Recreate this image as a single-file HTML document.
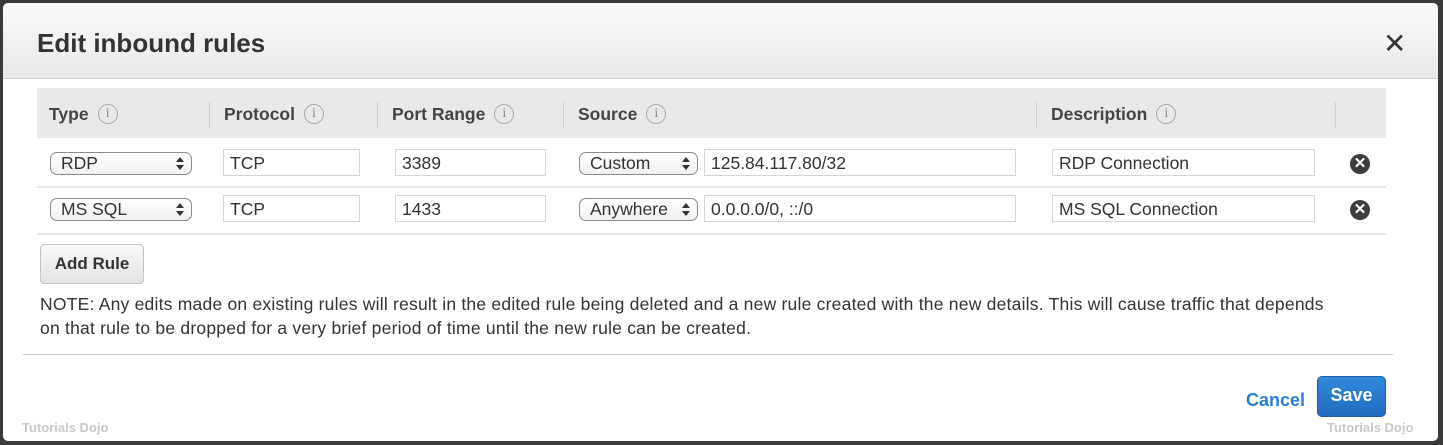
<!DOCTYPE html>
<html><head><meta charset="utf-8"><style>
*{box-sizing:border-box;margin:0;padding:0}
body{width:1443px;height:445px;background:#3a3a3a;position:relative;overflow:hidden;font-family:"Liberation Sans",Arial,sans-serif;color:#333}
#dlg{position:absolute;left:3px;top:3px;width:1435px;height:438px;background:#fff;border-radius:5px;overflow:hidden}
#hdr{position:absolute;left:0;top:0;width:100%;height:76px;background:linear-gradient(#fafafa,#e9e9e9);border-bottom:1px solid #cfcfcf}
.a{position:absolute;white-space:nowrap}
.th{position:absolute;left:34px;top:85px;width:1349px;height:52px;background:#e9e9e9;border-bottom:2px solid #fff}
.hl{font-size:17.5px;font-weight:bold;color:#444;top:98px;height:26px;display:flex;align-items:center}
.i{display:inline-block;width:20px;height:20px;border:1px solid #aaa;border-radius:50%;font:14px "Liberation Serif",serif;color:#888;text-align:center;line-height:18px;margin-left:9px;font-weight:normal}
.sep{position:absolute;top:99px;width:1px;height:26px;background:#cfcfcf}
.rl{position:absolute;left:34px;width:1349px;height:2px;background:#e6e6e6}
.inp{position:absolute;height:27px;border:1px solid #d5d5d5;font-size:17.5px;padding-left:6px;padding-top:2px;line-height:23px;color:#333}
.sel{position:absolute;height:23px;border:1px solid #8a8a8a;border-radius:7px;font-size:17.5px;padding-left:10px;line-height:21px;background:linear-gradient(#fff,#f0f0f0)}
.sel:after{content:"";position:absolute;right:7px;top:4px;border:4px solid transparent;border-bottom:5px solid #333;border-top:0}
.sel:before{content:"";position:absolute;right:7px;top:12px;border:4px solid transparent;border-top:5px solid #333;border-bottom:0}
.x{position:absolute;width:20px;height:20px;border-radius:50%;background:#3d3d3d;color:#fff;font-size:15px;font-weight:bold;text-align:center;line-height:20px}
.wm{font-size:13px;font-weight:bold;color:#c8c8c8}
</style></head><body>
<div id="dlg">
<div id="hdr"></div>
<div class="a" style="left:34px;top:25px;font-size:26px;font-weight:bold;color:#333">Edit inbound rules</div>
<div class="a" style="left:1380px;top:27px;font-size:28px;color:#333;line-height:28px">✕</div>
<div class="th"></div>
<div class="a hl" style="left:46px">Type<span class="i">i</span></div>
<div class="sep" style="left:206px"></div>
<div class="a hl" style="left:221px">Protocol<span class="i">i</span></div>
<div class="sep" style="left:374px"></div>
<div class="a hl" style="left:389px">Port Range<span class="i">i</span></div>
<div class="sep" style="left:560px"></div>
<div class="a hl" style="left:575px">Source<span class="i">i</span></div>
<div class="sep" style="left:1033px"></div>
<div class="a hl" style="left:1048px">Description<span class="i">i</span></div>
<div class="sep" style="left:1332px"></div>

<div class="sel" style="left:47px;top:149px;width:142px">RDP</div>
<div class="inp" style="left:220px;top:146px;width:137px">TCP</div>
<div class="inp" style="left:392px;top:146px;width:151px">3389</div>
<div class="sel" style="left:576px;top:149px;width:119px">Custom</div>
<div class="inp" style="left:701px;top:146px;width:312px">125.84.117.80/32</div>
<div class="inp" style="left:1049px;top:146px;width:263px">RDP Connection</div>
<div class="x" style="left:1347px;top:151px">✕</div>
<div class="rl" style="top:183px"></div>

<div class="sel" style="left:47px;top:195px;width:142px">MS SQL</div>
<div class="inp" style="left:220px;top:192px;width:137px">TCP</div>
<div class="inp" style="left:392px;top:192px;width:151px">1433</div>
<div class="sel" style="left:576px;top:195px;width:119px">Anywhere</div>
<div class="inp" style="left:701px;top:192px;width:312px">0.0.0.0/0, ::/0</div>
<div class="inp" style="left:1049px;top:192px;width:263px">MS SQL Connection</div>
<div class="x" style="left:1347px;top:197px">✕</div>
<div class="rl" style="top:230px"></div>

<div class="a" style="left:37px;top:241px;width:104px;height:40px;border:1px solid #c4c4c4;border-radius:4px;background:linear-gradient(#f8f8f8,#e4e4e4);font-size:17px;font-weight:bold;text-align:center;line-height:38px">Add Rule</div>
<div class="a" style="left:37px;top:289px;font-size:17.5px;letter-spacing:0.22px;line-height:24px;color:#333">NOTE: Any edits made on existing rules will result in the edited rule being deleted and a new rule created with the new details. This will cause traffic that depends<br>on that rule to be dropped for a very brief period of time until the new rule can be created.</div>
<div class="a" style="left:20px;top:351px;width:1370px;height:1px;background:#ccc"></div>
<div class="a" style="left:1243px;top:387px;font-size:18px;font-weight:bold;color:#2a7fd4">Cancel</div>
<div class="a" style="left:1314px;top:373px;width:69px;height:41px;border-radius:5px;background:linear-gradient(#3389db,#1f6cc0);border:1px solid #1a5fa8;color:#fff;font-size:18px;font-weight:bold;text-align:center;line-height:36px">Save</div>
<div class="a wm" style="left:19px;top:417px">Tutorials Dojo</div>
<div class="a wm" style="left:1324px;top:417px">Tutorials Dojo</div>
</div>
</body></html>
